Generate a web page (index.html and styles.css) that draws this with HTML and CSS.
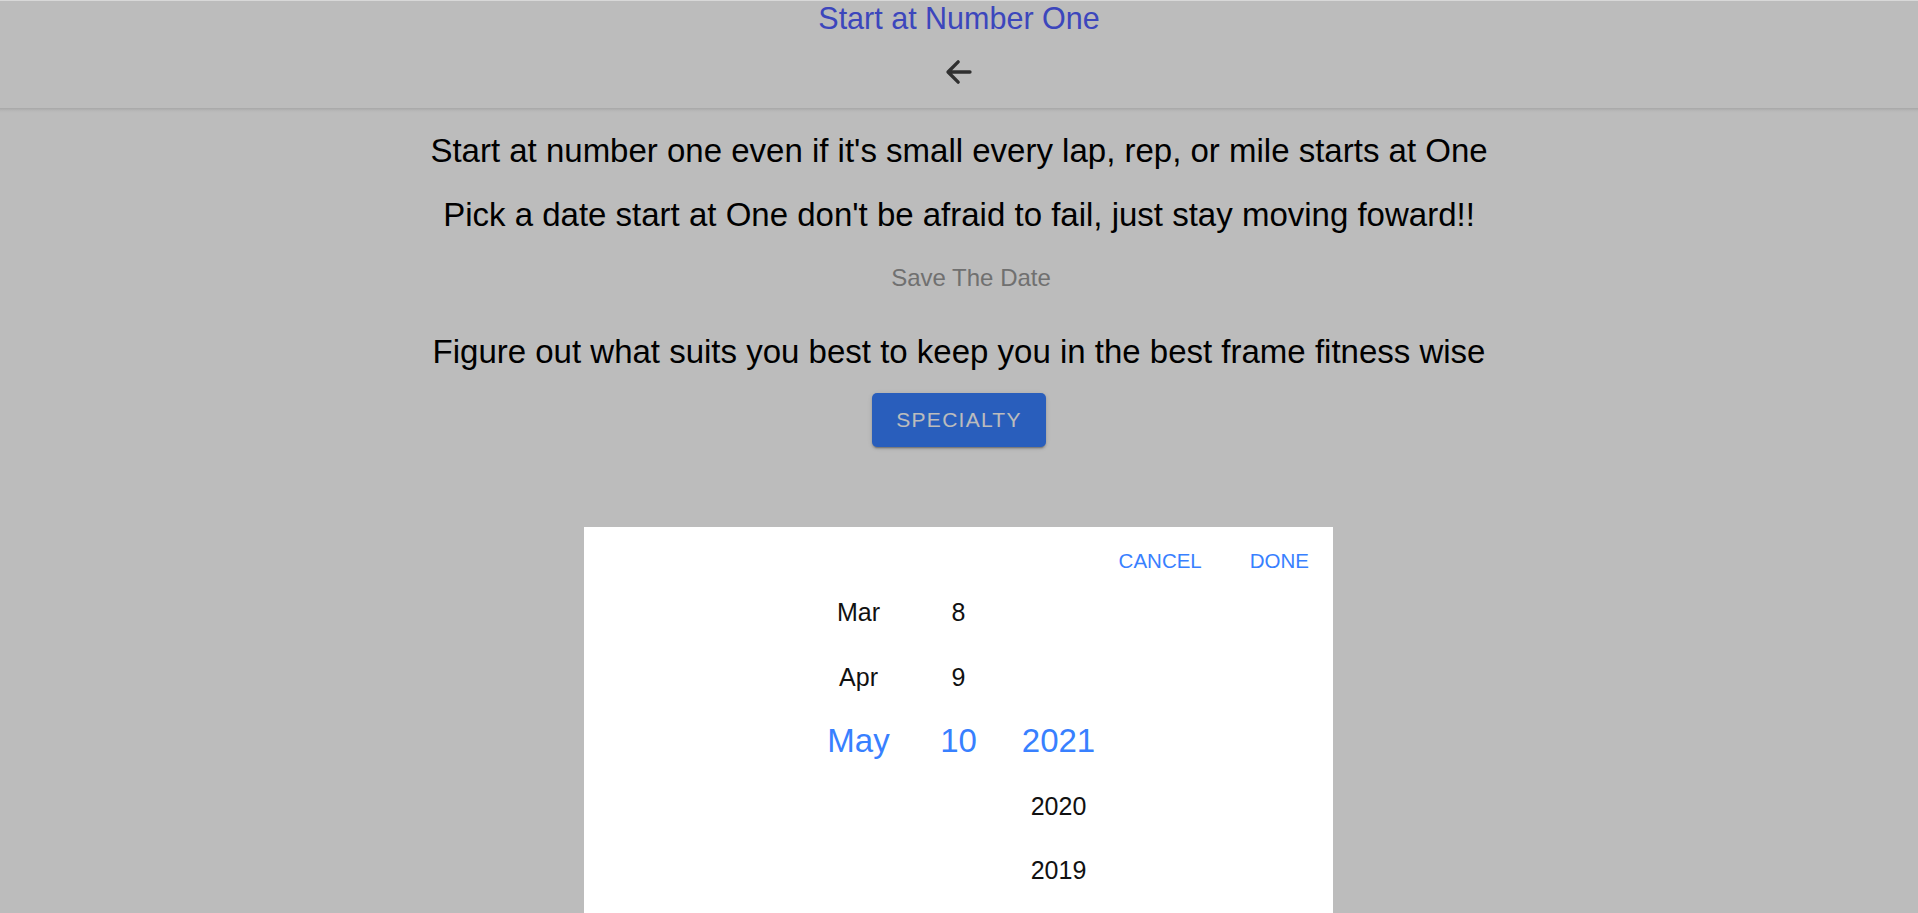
FILE: index.html
```html
<!DOCTYPE html>
<html lang="en">
<head>
<meta charset="utf-8">
<title>Start at Number One</title>
<link rel="stylesheet" href="styles.css">
</head>
<body>
<div class="app">
  <header class="toolbar">
    <div class="title">Start at Number One</div>
    <div class="back">
      <svg class="back-icon" viewBox="0 0 512 512" width="36" height="36" aria-hidden="true">
        <path fill="none" stroke="currentColor" stroke-linecap="round" stroke-linejoin="round" stroke-width="48" d="M244 400L100 256l144-144M120 256h292"/>
      </svg>
    </div>
  </header>
  <main class="content">
    <p class="lead first">Start at number one even if it's small every lap, rep, or mile starts at One</p>
    <p class="lead second">Pick a date start at One don't be afraid to fail, just stay moving foward!!</p>
    <div class="datetime">Save The Date</div>
    <p class="lead third">Figure out what suits you best to keep you in the best frame fitness wise</p>
    <button class="btn">Specialty</button>
  </main>
</div>
<div class="backdrop"></div>
<div class="picker">
  <div class="picker-toolbar">
    <button class="picker-btn">Cancel</button>
    <button class="picker-btn">Done</button>
  </div>
  <div class="picker-columns">
    <div class="col">
      <div class="opt">Mar</div>
      <div class="opt">Apr</div>
      <div class="opt sel">May</div>
      <div class="opt"></div>
      <div class="opt"></div>
    </div>
    <div class="col">
      <div class="opt">8</div>
      <div class="opt">9</div>
      <div class="opt sel">10</div>
      <div class="opt"></div>
      <div class="opt"></div>
    </div>
    <div class="col">
      <div class="opt"></div>
      <div class="opt"></div>
      <div class="opt sel">2021</div>
      <div class="opt">2020</div>
      <div class="opt">2019</div>
    </div>
  </div>
</div>
</body>
</html>
```
FILE: styles.css
```css
html, body {
  margin: 0;
  padding: 0;
  height: 100%;
  overflow: hidden;
}

body {
  background: #ffffff;
  font-family: "Liberation Sans", Arial, sans-serif;
  border-top: 1px solid #d8d8d8;
  box-sizing: border-box;
}

.app {
  display: flex;
  flex-direction: column;
}

.toolbar {
  position: relative;
  height: 107px;
  background: #ffffff;
  display: flex;
  flex-direction: column;
  align-items: center;
}

.toolbar::after {
  content: "";
  position: absolute;
  left: 0;
  right: 0;
  bottom: -5px;
  height: 5px;
  background: linear-gradient(rgba(0, 0, 0, 0.11), rgba(0, 0, 0, 0.02) 60%, rgba(0, 0, 0, 0));
}

.title {
  height: 34px;
  line-height: 34px;
  font-size: 30.5px;
  color: #5260ff;
}

.back {
  flex: 1;
  display: flex;
  align-items: center;
  justify-content: center;
  color: #424242;
}

.back-icon {
  display: block;
}

.content {
  display: flex;
  flex-direction: column;
  align-items: center;
  text-align: center;
}

.lead {
  margin: 0;
  font-size: 33px;
  line-height: 40px;
  color: #000000;
}

.first {
  margin-top: 23px;
}

.second {
  margin-top: 24px;
}

.datetime {
  margin-top: 28px;
  padding-left: 24px;
  font-size: 24px;
  line-height: 30px;
  color: #999999;
}

.third {
  margin-top: 39px;
}

.btn {
  margin-top: 21px;
  width: 174px;
  height: 54px;
  border: 0;
  border-radius: 5px;
  background: #3880ff;
  color: #ffffff;
  font-family: "Liberation Sans", Arial, sans-serif;
  font-size: 21px;
  letter-spacing: 0.06em;
  text-transform: uppercase;
  padding: 0;
  box-shadow: 0 3px 1px -2px rgba(0, 0, 0, 0.2), 0 2px 2px 0 rgba(0, 0, 0, 0.14), 0 1px 5px 0 rgba(0, 0, 0, 0.12);
}

.backdrop {
  position: fixed;
  left: 0;
  right: 0;
  top: 1px;
  bottom: 0;
  background: rgba(0, 0, 0, 0.262);
}

.picker {
  position: fixed;
  left: 584px;
  width: 749px;
  top: 527px;
  bottom: 0;
  background: #ffffff;
  display: flex;
  flex-direction: column;
}

.picker-toolbar {
  height: 53px;
  box-sizing: border-box;
  padding-top: 22px;
  display: flex;
  justify-content: flex-end;
}

.picker-btn {
  border: 0;
  background: transparent;
  padding: 0 24px;
  height: 24px;
  line-height: 24px;
  font-family: "Liberation Sans", Arial, sans-serif;
  font-size: 20.5px;
  color: #3880ff;
  text-transform: uppercase;
}

.picker-columns {
  display: flex;
  justify-content: center;
}

.col {
  width: 100px;
  display: flex;
  flex-direction: column;
}

.opt {
  height: 64.5px;
  line-height: 64.5px;
  text-align: center;
  font-size: 25px;
  color: #111111;
  white-space: nowrap;
}

.opt.sel {
  font-size: 33px;
  color: #3880ff;
}
```
